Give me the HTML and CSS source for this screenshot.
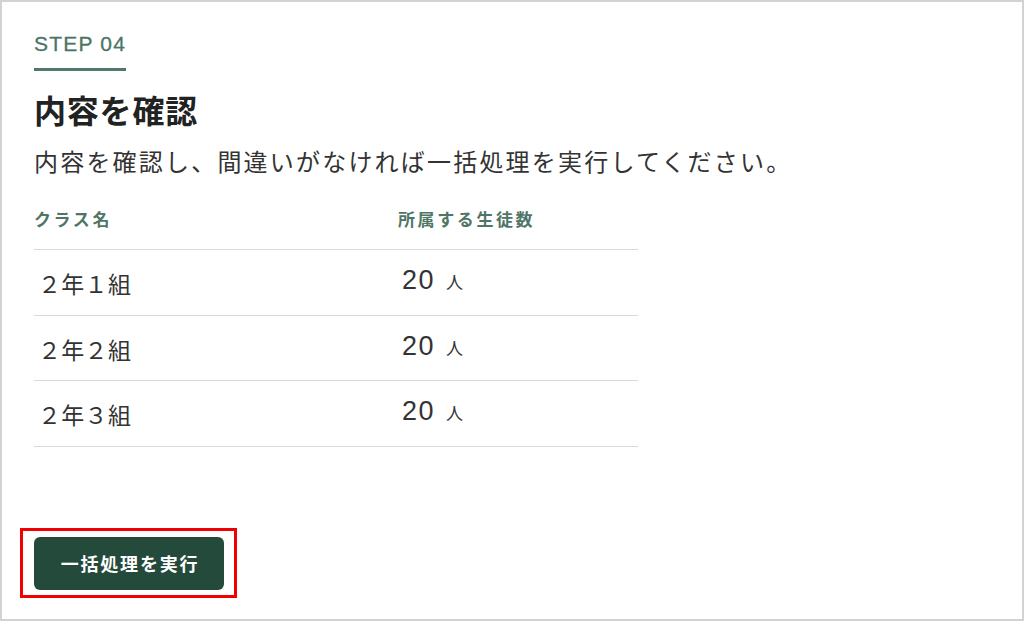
FILE: index.html
```html
<!DOCTYPE html>
<html lang="ja">
<head>
<meta charset="utf-8">
<title>STEP 04 内容を確認</title>
<link rel="stylesheet" href="styles.css">
</head>
<body>
<div class="frame">
  <div class="step"><span class="step-label">STEP 04</span></div>
  <h1 class="title">内容を確認</h1>
  <p class="desc">内容を確認し、間違いがなければ一括処理を実行してください。</p>
  <div class="list">
    <div class="row head">
      <div class="cell">クラス名</div>
      <div class="cell">所属する生徒数</div>
    </div>
    <div class="row">
      <div class="cell name">２年１組</div>
      <div class="cell count"><span class="num">20</span><span class="unit">人</span></div>
    </div>
    <div class="row">
      <div class="cell name">２年２組</div>
      <div class="cell count"><span class="num">20</span><span class="unit">人</span></div>
    </div>
    <div class="row">
      <div class="cell name">２年３組</div>
      <div class="cell count"><span class="num">20</span><span class="unit">人</span></div>
    </div>
  </div>
  <div class="actions">
    <div class="highlight"><button class="btn" type="button">一括処理を実行</button></div>
  </div>
</div>
</body>
</html>
```

FILE: styles.css
```css
html, body {
  margin: 0;
  padding: 0;
  background: #ffffff;
}

.frame {
  box-sizing: border-box;
  width: 1024px;
  height: 621px;
  border: 2px solid #d2d2d2;
  padding: 32px 0 0 32px;
  display: flex;
  flex-direction: column;
  align-items: flex-start;
  font-family: "Liberation Sans", "Noto Sans CJK JP", sans-serif;
  color: #333333;
}

.step {
  display: flex;
}

.step-label {
  display: inline-block;
  font-size: 21px;
  line-height: 20px;
  letter-spacing: 1.2px;
  color: #4a7564;
  padding-bottom: 14px;
  border-bottom: 3px solid #4f7a69;
  -webkit-text-stroke: 0.3px #4a7564;
}

.title {
  margin: 18px 0 0;
  font-family: "Noto Sans CJK JP", sans-serif;
  font-size: 32px;
  line-height: 40px;
  font-weight: 700;
  letter-spacing: 0.8px;
  color: #222222;
}

.desc {
  margin: 14px 0 0;
  font-family: "Noto Sans CJK JP", sans-serif;
  font-size: 24px;
  line-height: 36px;
  letter-spacing: 2.2px;
  color: #333333;
}

.list {
  margin-top: 28px;
  width: 604px;
  display: flex;
  flex-direction: column;
}

.row {
  display: grid;
  grid-template-columns: 364px 240px;
  align-items: center;
  box-sizing: border-box;
  height: 65.5px;
  border-bottom: 1px solid #d9d9d9;
}

.row.head {
  height: auto;
  align-items: start;
  padding-bottom: 18px;
}

.row.head .cell {
  font-family: "Noto Sans CJK JP", sans-serif;
  font-size: 17px;
  line-height: 24px;
  font-weight: 700;
  letter-spacing: 2.6px;
  color: #4f7566;
}

.cell.name {
  padding: 2px 0 0 4px;
  font-family: "Noto Sans CJK JP", sans-serif;
  font-size: 23px;
  line-height: 32px;
  letter-spacing: 0.3px;
  color: #333333;
}

.cell.count {
  padding: 0 0 0 4px;
  line-height: 32px;
  color: #333333;
}

.num {
  font-family: "Liberation Sans", sans-serif;
  font-size: 27px;
  letter-spacing: 1.5px;
}

.unit {
  margin-left: 11px;
  font-family: "Noto Sans CJK JP", sans-serif;
  font-size: 17px;
}

.actions {
  margin-top: 81px;
  display: flex;
}

.highlight {
  margin-left: -14px;
  border: 3px solid #f00000;
  padding: 6px 10px 5px 11px;
  display: flex;
}

.btn {
  width: 190px;
  height: 53px;
  padding: 0 0 0 2px;
  border: 0;
  border-radius: 6px;
  background: #244a3c;
  color: #ffffff;
  font-family: "Noto Sans CJK JP", sans-serif;
  font-size: 18px;
  font-weight: 700;
  letter-spacing: 1.8px;
  cursor: pointer;
}
```
